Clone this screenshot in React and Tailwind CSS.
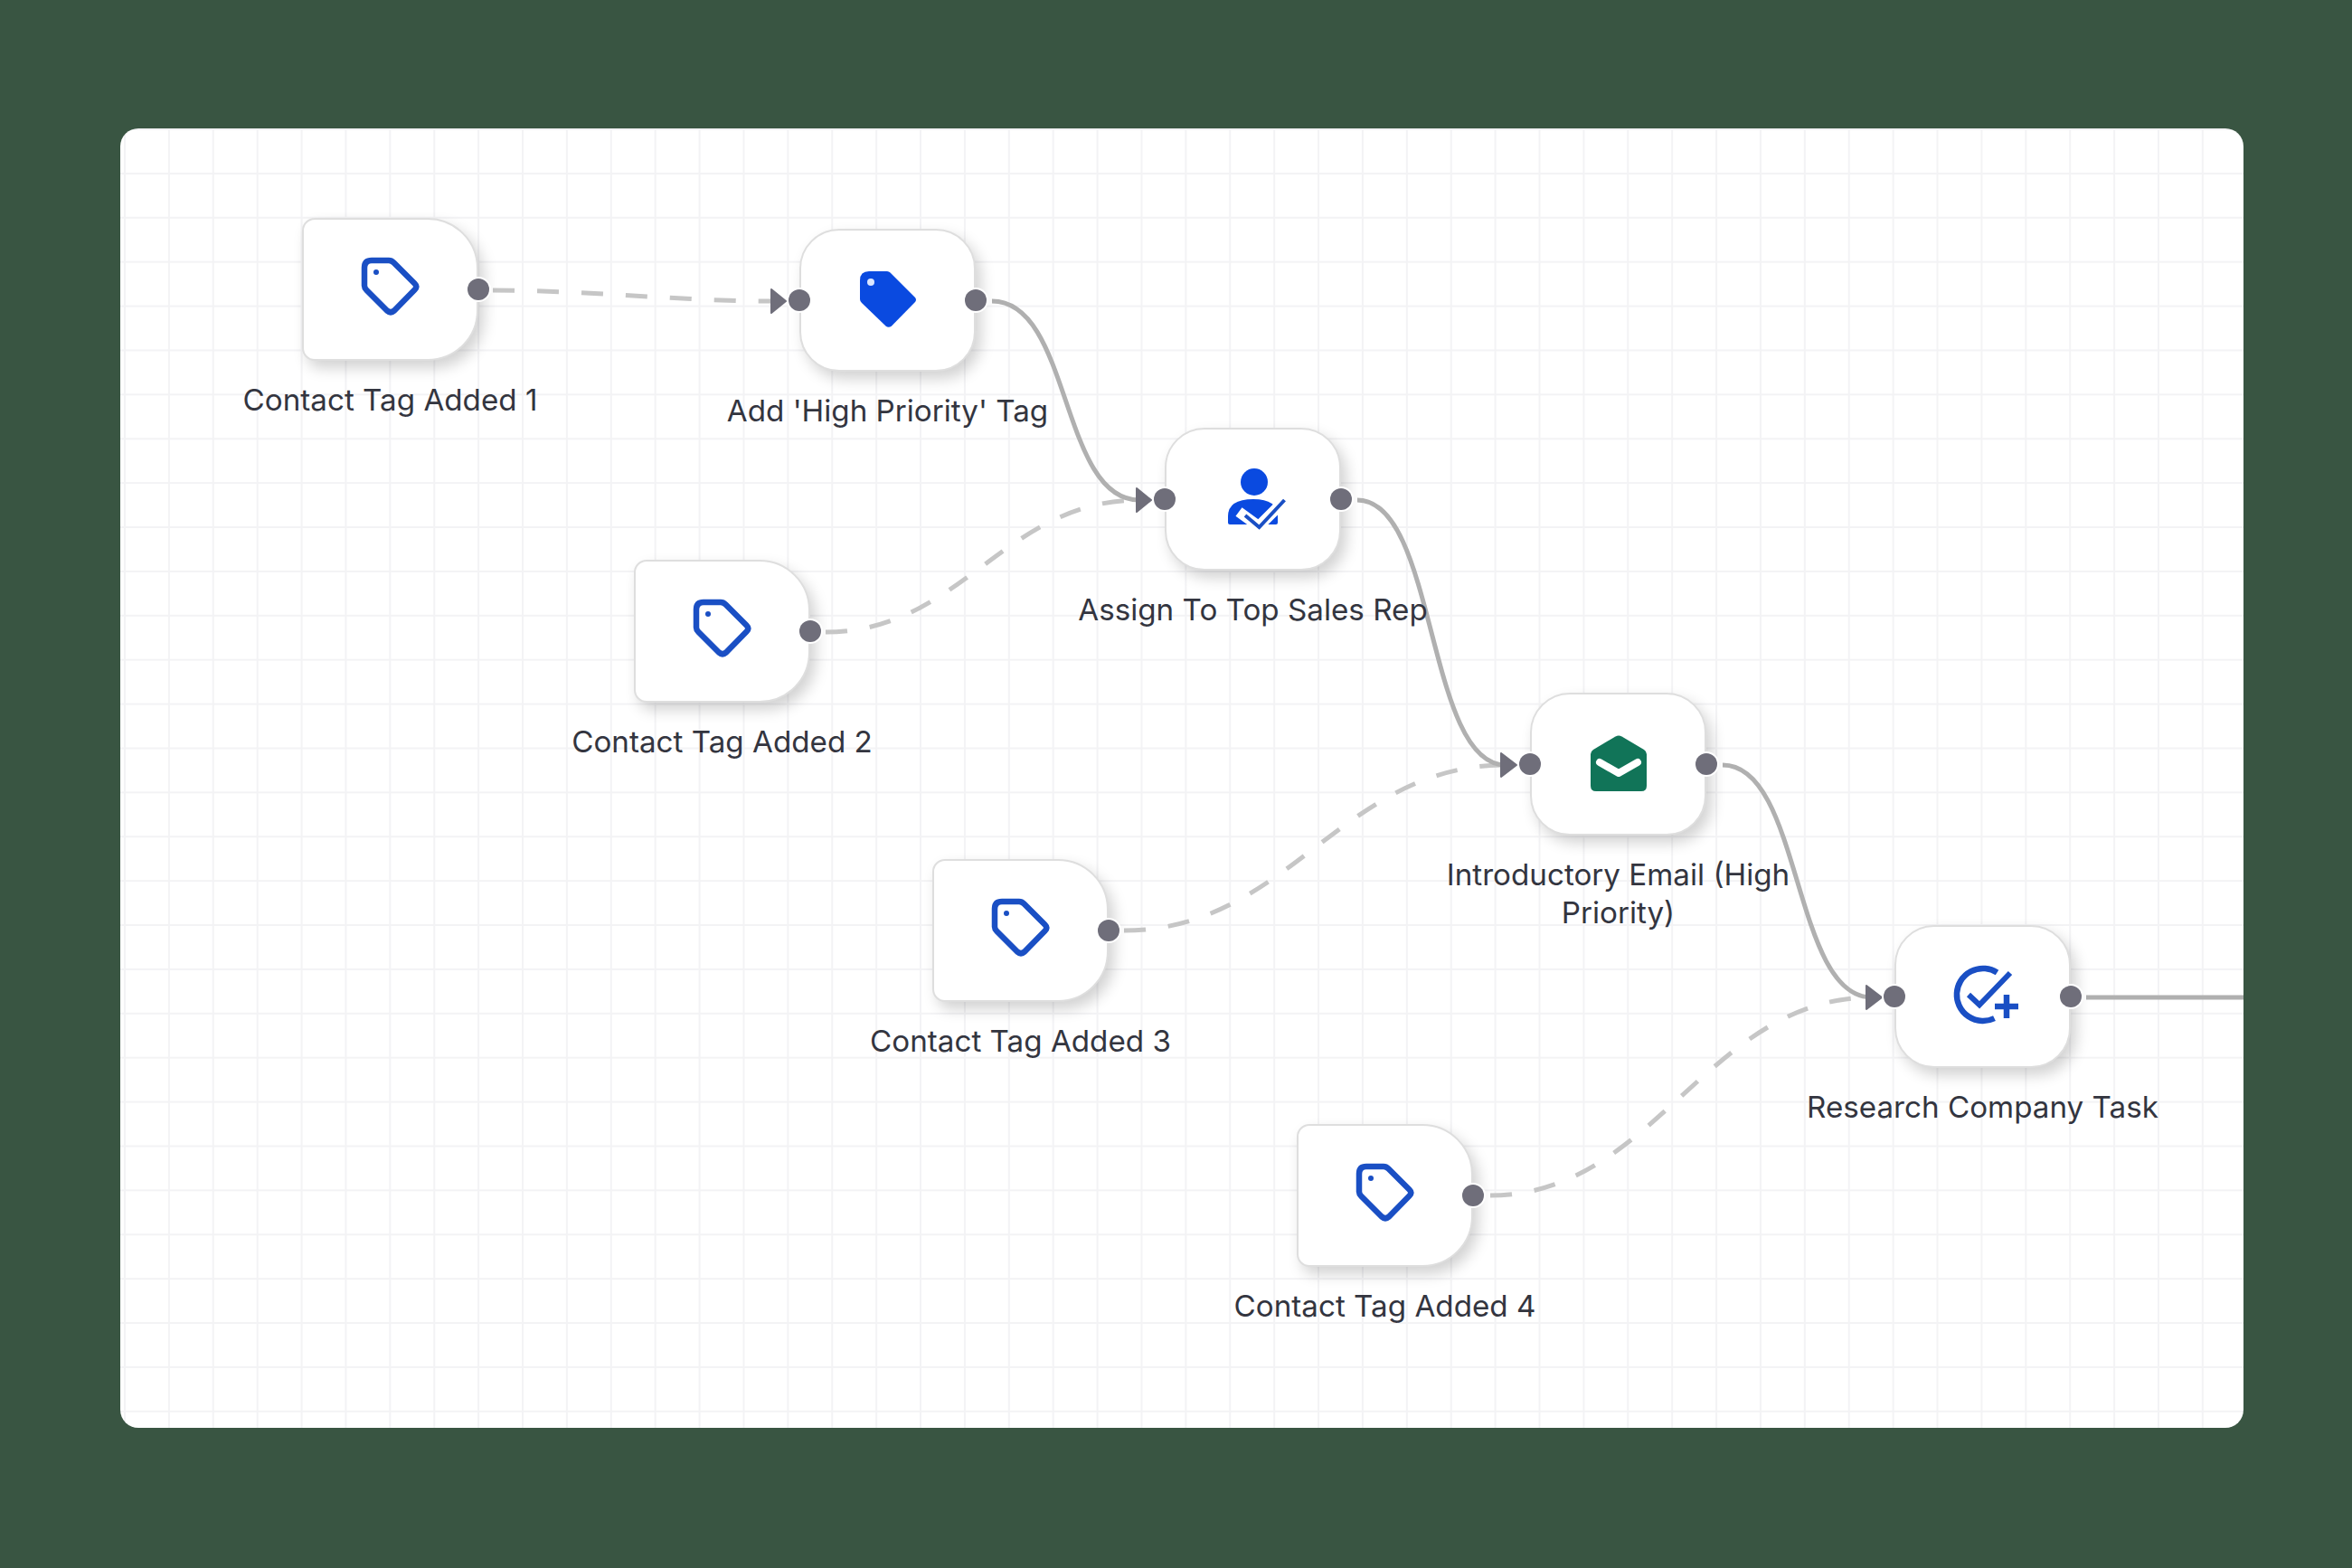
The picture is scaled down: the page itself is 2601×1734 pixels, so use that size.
import React from "react";

const BLUE = "#1a4fc4";
const BRIGHT = "#0a4ae0";
const GREEN = "#117458";

function TagOutline() {
    return (
        <svg width="66" height="66" viewBox="0 0 66 66" fill="none" className="mb-[6px]">
            <path d="M12 4 H31 Q34 4 36.500 6.500 L59.500 29.500 Q63 33 59.500 36.500 L37 59.500 Q33 63 29 59.500 L6.500 37 Q4 34.500 4 32 V12 Q4 4 12 4 Z" stroke={BLUE} strokeWidth="6.500" strokeLinejoin="round" />
            <circle cx="17" cy="17" r="3" fill={BLUE} />
        </svg>
    );
}

function TagFilled() {
    return (
        <svg width="64" height="64" viewBox="0 0 64 64" className="mb-[3px]">
            <path d="M11 1 H31 Q33 1 34.500 2.500 L62 30 Q64 32.500 62 35 L36 61.500 Q32.500 64 29.500 61.500 L3 36 Q1 34 1 32 V11 Q1 1 11 1 Z" fill={BRIGHT} />
            <circle cx="13" cy="13" r="4" fill="#dbe6ff" />
        </svg>
    );
}

function PersonCheck() {
    return (
        <svg width="80" height="80" viewBox="0 0 80 80">
            <circle cx="41" cy="21" r="15" fill={BRIGHT} />
            <path d="M12 66 V59 Q12 40 40 40 Q67 40 67 59 V66 Q67 68 65 68 H14 Q12 68 12 66 Z" fill={BRIGHT} />
            <path d="M24 54 L46 70 L76 40" fill="none" stroke="#ffffff" strokeWidth="12" />
            <path d="M31 58 L46.500 71 L74.500 41" fill="none" stroke={BLUE} strokeWidth="4" />
        </svg>
    );
}

function MailOpen() {
    return (
        <svg width="64" height="64" viewBox="0 0 64 64">
            <path d="M28.500 1.500 Q32 -0.500 35.500 1.500 L60 16 Q63 18 63 21 V56 Q63 62 57 62 H7 Q1 62 1 56 V21 Q1 18 4 16 Z" fill={GREEN} />
            <path d="M11 30 L32 42 L53 30" fill="none" stroke="#ffffff" strokeWidth="8" strokeLinecap="round" strokeLinejoin="round" />
        </svg>
    );
}

function TaskAdd() {
    return (
        <svg width="90" height="90" viewBox="0 0 90 90" fill="none" stroke={BLUE}>
            <path d="M60.500 18.500 A29 29 0 1 0 57.500 69.100" strokeWidth="6.500" />
            <path d="M29 43 L41 54.300 L75 19" strokeWidth="6" />
            <path d="M58 56 H84 M71 43 V69" strokeWidth="6.500" />
        </svg>
    );
}

function Port({ side }) {
    return (
        <span className={side === "left"
            ? "absolute -left-[14px] top-1/2 -translate-y-1/2 w-6 h-6 rounded-full bg-[#6f6e7a] ring-2 ring-white"
            : "absolute -right-[14px] top-1/2 -translate-y-1/2 w-6 h-6 rounded-full bg-[#6f6e7a] ring-2 ring-white"} />
    );
}

function Node({ pos, shape, icon, input, label }) {
    return (
        <div className={"absolute w-[195px] flex flex-col items-center " + pos}>
            <div className={"relative w-[195px] h-[158px] shrink-0 bg-white border-2 border-[#dedede] shadow-[6px_8px_16px_rgba(0,0,0,0.18)] flex items-center justify-center " + shape}>
                {icon}
                {input && <Port side="left" />}
                <Port side="right" />
            </div>
            <div className="mt-[23px] w-[400px] shrink-0 text-center text-[#33353f] text-[33.200px] leading-[41.500px]">
                {label}
            </div>
        </div>
    );
}

const triggerShape = "rounded-l-[14px] rounded-r-[56px]";
const actionShape = "rounded-[44px]";

const dashed = [
    "M412 179 C517 179 617 191 722 191",
    "M780 557 C930 557 977 411 1127 411",
    "M1110 887 C1292 887 1350 704 1532 704",
    "M1515 1180 C1697 1180 1755 961 1937 961",
];

const solid = [
    "M964 191 C1052 191 1039 411 1127 411",
    "M1368 411 C1456 411 1444 704 1532 704",
    "M1772 704 C1860 704 1849 961 1937 961",
    "M2174 961 H2348",
];

const arrows = [
    "720,178 736,191 720,204",
    "1124,398 1140,411 1124,424",
    "1527,691 1544,704 1527,717",
    "1931,948 1948,961 1931,974",
];

export default function App() {
    return (
        <div className="w-[2601px] h-[1734px] bg-[#395542] pl-[133px] pt-[142px] [font-family:Inter,sans-serif]">
            <div className="relative w-[2348px] h-[1437px] bg-white rounded-[20px] overflow-hidden bg-[linear-gradient(to_right,#f3f3f5_2px,transparent_2px),linear-gradient(to_bottom,#f3f3f5_2px,transparent_2px)] bg-[size:48.900px_48.900px] bg-[position:4px_0px]">
                <svg className="absolute inset-0" width="2348" height="1437" fill="none">
                    {dashed.map((d, i) => (
                        <path key={i} d={d} stroke="#c6c6c6" strokeWidth="5" strokeDasharray="24 25" />
                    ))}
                    {solid.map((d, i) => (
                        <path key={i} d={d} stroke="#b0b0b0" strokeWidth="5" />
                    ))}
                    {arrows.map((p, i) => (
                        <polygon key={i} points={p} fill="#6f6e7a" stroke="#6f6e7a" strokeWidth="2" strokeLinejoin="round" />
                    ))}
                </svg>

                <Node pos="left-[201px] top-[99px]" shape={triggerShape} icon={<TagOutline />} label="Contact Tag Added 1" />
                <Node pos="left-[751px] top-[111px]" shape={actionShape} icon={<TagFilled />} input label="Add 'High Priority' Tag" />
                <Node pos="left-[568px] top-[477px]" shape={triggerShape} icon={<TagOutline />} label="Contact Tag Added 2" />
                <Node pos="left-[1155px] top-[331px]" shape={actionShape} icon={<PersonCheck />} input label="Assign To Top Sales Rep" />
                <Node pos="left-[898px] top-[808px]" shape={triggerShape} icon={<TagOutline />} label="Contact Tag Added 3" />
                <Node pos="left-[1559px] top-[624px]" shape={actionShape} icon={<MailOpen />} input label="Introductory Email (High Priority)" />
                <Node pos="left-[1301px] top-[1101px]" shape={triggerShape} icon={<TagOutline />} label="Contact Tag Added 4" />
                <Node pos="left-[1962px] top-[881px]" shape={actionShape} icon={<TaskAdd />} input label="Research Company Task" />
            </div>
        </div>
    );
}
